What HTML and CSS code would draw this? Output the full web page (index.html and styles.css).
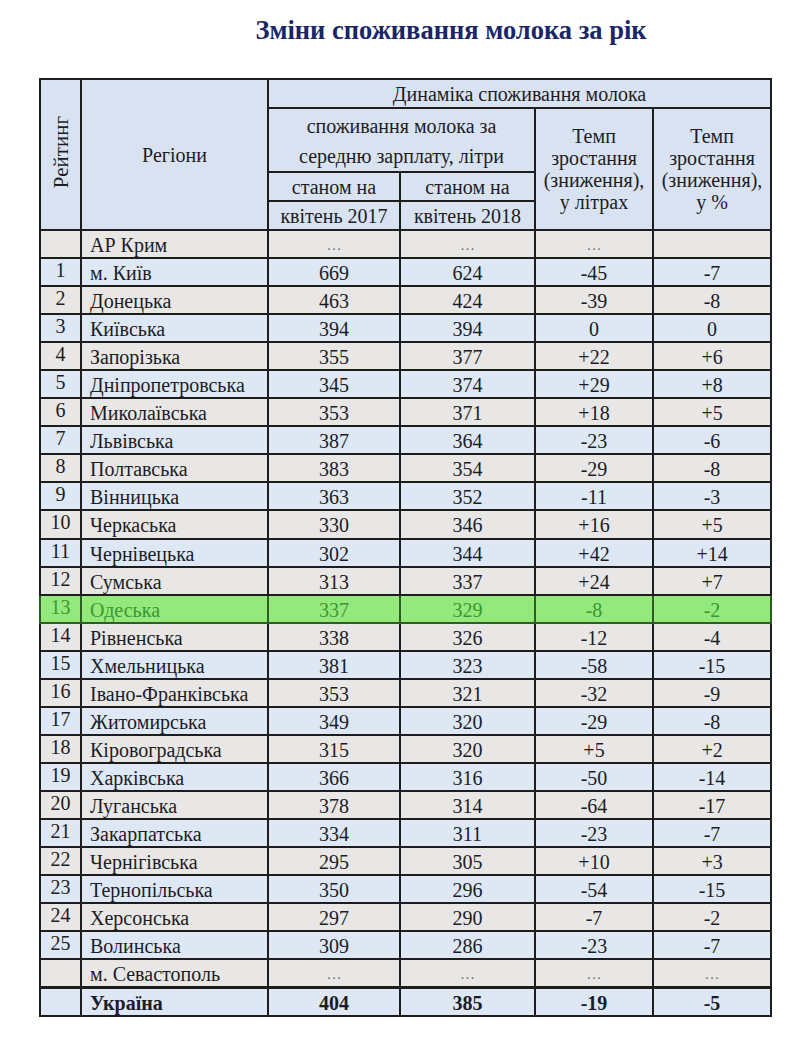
FILE: index.html
```html
<!DOCTYPE html>
<html lang="uk">
<head>
<meta charset="utf-8">
<title>Зміни споживання молока за рік</title>
<link rel="stylesheet" href="styles.css">
</head>
<body>
<div class="page">
  <h1 class="title">Зміни споживання молока за рік</h1>
  <table class="milk">
    <colgroup>
      <col class="c-rank"><col class="c-region"><col class="c-n1"><col class="c-n2"><col class="c-t1"><col class="c-t2">
    </colgroup>
    <thead>
      <tr class="h1">
        <th rowspan="4" class="rank-h"><span class="vert">Рейтинг</span></th>
        <th rowspan="4">Регіони</th>
        <th colspan="4">Динаміка споживання молока</th>
      </tr>
      <tr class="h2">
        <th colspan="2" class="light-b">споживання молока за<br>середню зарплату, літри</th>
        <th rowspan="3" class="tmp">Темп<br>зростання<br>(зниження),<br>у літрах</th>
        <th rowspan="3" class="tmp">Темп<br>зростання<br>(зниження),<br>у %</th>
      </tr>
      <tr class="h3">
        <th class="light-b">станом на</th>
        <th class="light-b">станом на</th>
      </tr>
      <tr class="h4">
        <th>квітень 2017</th>
        <th>квітень 2018</th>
      </tr>
    </thead>
    <tbody>
      <tr class="gray"><td class="rank"></td><td class="reg">АР Крим</td><td class="dots">…</td><td class="dots">…</td><td class="dots">…</td><td></td></tr>
      <tr class="blue"><td class="rank">1</td><td class="reg">м. Київ</td><td>669</td><td>624</td><td>-45</td><td>-7</td></tr>
      <tr class="gray"><td class="rank">2</td><td class="reg">Донецька</td><td>463</td><td>424</td><td>-39</td><td>-8</td></tr>
      <tr class="blue"><td class="rank">3</td><td class="reg">Київська</td><td>394</td><td>394</td><td>0</td><td>0</td></tr>
      <tr class="gray"><td class="rank">4</td><td class="reg">Запорізька</td><td>355</td><td>377</td><td>+22</td><td>+6</td></tr>
      <tr class="blue"><td class="rank">5</td><td class="reg">Дніпропетровська</td><td>345</td><td>374</td><td>+29</td><td>+8</td></tr>
      <tr class="gray"><td class="rank">6</td><td class="reg">Миколаївська</td><td>353</td><td>371</td><td>+18</td><td>+5</td></tr>
      <tr class="blue"><td class="rank">7</td><td class="reg">Львівська</td><td>387</td><td>364</td><td>-23</td><td>-6</td></tr>
      <tr class="gray"><td class="rank">8</td><td class="reg">Полтавська</td><td>383</td><td>354</td><td>-29</td><td>-8</td></tr>
      <tr class="blue"><td class="rank">9</td><td class="reg">Вінницька</td><td>363</td><td>352</td><td>-11</td><td>-3</td></tr>
      <tr class="gray"><td class="rank">10</td><td class="reg">Черкаська</td><td>330</td><td>346</td><td>+16</td><td>+5</td></tr>
      <tr class="blue"><td class="rank">11</td><td class="reg">Чернівецька</td><td>302</td><td>344</td><td>+42</td><td>+14</td></tr>
      <tr class="gray"><td class="rank">12</td><td class="reg">Сумська</td><td>313</td><td>337</td><td>+24</td><td>+7</td></tr>
      <tr class="green"><td class="rank">13</td><td class="reg">Одеська</td><td>337</td><td>329</td><td>-8</td><td>-2</td></tr>
      <tr class="gray"><td class="rank">14</td><td class="reg">Рівненська</td><td>338</td><td>326</td><td>-12</td><td>-4</td></tr>
      <tr class="blue"><td class="rank">15</td><td class="reg">Хмельницька</td><td>381</td><td>323</td><td>-58</td><td>-15</td></tr>
      <tr class="gray"><td class="rank">16</td><td class="reg">Івано-Франківська</td><td>353</td><td>321</td><td>-32</td><td>-9</td></tr>
      <tr class="blue"><td class="rank">17</td><td class="reg">Житомирська</td><td>349</td><td>320</td><td>-29</td><td>-8</td></tr>
      <tr class="gray"><td class="rank">18</td><td class="reg">Кіровоградська</td><td>315</td><td>320</td><td>+5</td><td>+2</td></tr>
      <tr class="blue"><td class="rank">19</td><td class="reg">Харківська</td><td>366</td><td>316</td><td>-50</td><td>-14</td></tr>
      <tr class="gray"><td class="rank">20</td><td class="reg">Луганська</td><td>378</td><td>314</td><td>-64</td><td>-17</td></tr>
      <tr class="blue"><td class="rank">21</td><td class="reg">Закарпатська</td><td>334</td><td>311</td><td>-23</td><td>-7</td></tr>
      <tr class="gray"><td class="rank">22</td><td class="reg">Чернігівська</td><td>295</td><td>305</td><td>+10</td><td>+3</td></tr>
      <tr class="blue"><td class="rank">23</td><td class="reg">Тернопільська</td><td>350</td><td>296</td><td>-54</td><td>-15</td></tr>
      <tr class="gray"><td class="rank">24</td><td class="reg">Херсонська</td><td>297</td><td>290</td><td>-7</td><td>-2</td></tr>
      <tr class="blue"><td class="rank">25</td><td class="reg">Волинська</td><td>309</td><td>286</td><td>-23</td><td>-7</td></tr>
      <tr class="gray"><td class="rank"></td><td class="reg">м. Севастополь</td><td class="dots">…</td><td class="dots">…</td><td class="dots">…</td><td class="dots">…</td></tr>
      <tr class="blue total"><td class="rank"></td><td class="reg">Україна</td><td>404</td><td>385</td><td>-19</td><td>-5</td></tr>
    </tbody>
  </table>
</div>
</body>
</html>
```

FILE: styles.css
```css
html, body {
  margin: 0;
  padding: 0;
  background: #ffffff;
}

.page {
  padding-top: 15px;
  font-family: "Liberation Serif", "Times New Roman", serif;
  color: #1c1c26;
}

.title {
  margin: 0 0 33px 0;
  padding-left: 102px;
  text-align: center;
  font-size: 26.5px;
  line-height: 30px;
  font-weight: bold;
  color: #1b2667;
}

.milk {
  margin-left: 39px;
  width: 731px;
  border-collapse: collapse;
  table-layout: fixed;
  font-size: 20px;
  border: 2px solid #1d1d1d;
}

.c-rank { width: 41px; }
.c-region { width: 187px; }
.c-n1 { width: 132px; }
.c-n2 { width: 135px; }
.c-t1 { width: 118px; }
.c-t2 { width: 118px; }

.milk th,
.milk td {
  border: 2px solid #1d1d1d;
  padding: 0;
  font-weight: normal;
  text-align: center;
  line-height: 22px;
}

.milk thead th {
  background: #d9e2f1;
  vertical-align: middle;
}

.milk thead .light-b {
  border-bottom: 1px solid #a9b0bd;
}

.h1 { height: 29px; }
.h2 { height: 64px; }
.h3 { height: 29px; }
.h4 { height: 29px; }

.h2 th.light-b { line-height: 30px; padding-top: 2px; }
.tmp { line-height: 30px; }

.vert {
  display: inline-block;
  writing-mode: vertical-rl;
  transform: rotate(180deg);
  line-height: 26px;
  font-size: 21px;
}

.milk tbody tr { height: 28.05px; }

.milk tbody td {
  line-height: 24px;
  padding-top: 2px;
}

.milk td.rank {
  line-height: 22px;
  padding-top: 0;
  padding-bottom: 4px;
}

.milk td.reg {
  text-align: left;
  padding-left: 8px;
}

.milk td.dots {
  color: #6b6b6b;
  font-size: 15px;
}

.gray td { background: #e8e7e5; }
.blue td { background: #dde8f4; }

.green td {
  background: #93e97b;
  color: #3c9830;
  border-color: #2e5e26;
}

.total td {
  font-weight: bold;
  border-top: 3px solid #1d1d1d;
}
```
